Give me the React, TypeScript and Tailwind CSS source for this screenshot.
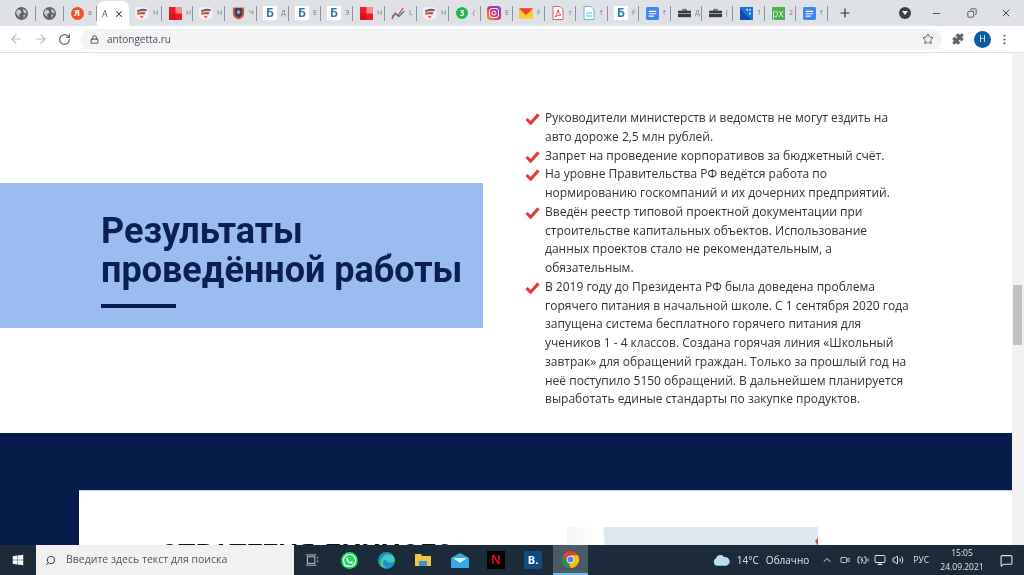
import { ArrowLeft, ArrowRight, RotateCw, Lock, Star, Puzzle, MoreVertical, Plus, Minus, X, Copy, Search, ChevronUp, Volume2, Monitor, MessageSquare, BatteryCharging, Video } from "lucide-react";
import { FaWhatsapp, FaWindows } from "react-icons/fa";

const sans = "font-['Open_Sans','Noto_Sans',sans-serif]";
const roboto = "font-['Roboto','Liberation_Sans',sans-serif]";

const Globe = () => (
  <svg viewBox="0 0 16 16" className="w-[13px] h-[13px]">
    <circle cx="8" cy="8" r="8" fill="#5f6368" />
    <path d="M3 3l4 1 1 3-3 2 1 4-3-3-2-3zM10 2l4 3 0 3-3-1-1-3zM10 10l3-1-2 5z" fill="#c9ccd1" />
  </svg>
);
const Ya = () => (
  <span className={`w-[13px] h-[13px] rounded-full bg-[#f0512a] text-white text-[9px] font-bold flex items-center justify-center ${sans}`}>Я</span>
);
const Shield = () => (
  <svg viewBox="0 0 16 16" className="w-[14px] h-[14px]">
    <rect y="1" width="15" height="14" rx="4" fill="#f1f1f1" />
    <path d="M2 5q6-3 12-1l-1 2q-6-1-10 1z" fill="#5f6468" />
    <path d="M2 8q6-2 10-1l-1 3q-5-1-8 0z" fill="#e8522f" />
    <path d="M5 12q3-1 5 0l-2 2z" fill="#e8522f" />
  </svg>
);
const RedSquare = () => (
  <svg viewBox="0 0 14 14" className="w-[13px] h-[13px]">
    <rect width="14" height="14" fill="#f3182a" />
    <rect x="7" width="7" height="7" fill="#f98c85" />
    <rect y="7" width="7" height="7" fill="#d8101f" />
  </svg>
);
const Emblem = () => (
  <svg viewBox="0 0 14 14" className="w-[13px] h-[14px]">
    <path d="M1 1h12v7q0 4-6 6-6-2-6-6z" fill="#d9552f" />
    <path d="M3 2h8v6q0 2-4 4-4-2-4-4z" fill="#2b3f66" />
    <circle cx="7" cy="6" r="2" fill="#9aa8b8" />
  </svg>
);
const Bb = () => (
  <span className={`w-[14px] h-[14px] bg-white text-[#2f7ab5] text-[12px] font-bold leading-[14px] text-center ${roboto}`}>Б</span>
);
const Chart = () => (
  <svg viewBox="0 0 16 16" className="w-[14px] h-[14px]" fill="none">
    <path d="M1 15L5 8l3 3 6-9" stroke="#e0403a" strokeWidth="1.3" />
    <path d="M1 12l4-3 4 3 6-6" stroke="#2f6fc4" strokeWidth="1.3" />
  </svg>
);
const Green3 = () => (
  <span className={`w-[12px] h-[12px] rounded-full bg-[#1fb84f] text-white text-[8px] font-bold flex items-center justify-center ${sans}`}>3</span>
);
const Insta = () => (
  <svg viewBox="0 0 14 14" className="w-[14px] h-[14px]">
    <defs>
      <linearGradient id="ig" x1="0" y1="1" x2="1" y2="0">
        <stop offset="0" stopColor="#f9a03c" />
        <stop offset="0.5" stopColor="#dd2a7b" />
        <stop offset="1" stopColor="#6a4fd0" />
      </linearGradient>
    </defs>
    <rect width="14" height="14" rx="3.5" fill="url(#ig)" />
    <rect x="2.5" y="2.5" width="9" height="9" rx="2.5" fill="none" stroke="#fff" strokeWidth="1" />
    <circle cx="7" cy="7" r="2" fill="none" stroke="#fff" strokeWidth="1" />
  </svg>
);
const Mail = () => (
  <svg viewBox="0 0 16 12" className="w-[15px] h-[11px]">
    <rect width="16" height="12" fill="#fcc934" />
    <path d="M0 0h16L8 8z" fill="#ea4335" />
  </svg>
);
const Pdf = () => (
  <svg viewBox="0 0 12 14" className="w-[12px] h-[14px]" fill="none">
    <path d="M1 .5h7l3 3v10H1z" fill="#fff" stroke="#e0605a" />
    <path d="M3 11q2-2 3-7 1 5 3 5-4 0-6 2z" stroke="#e0403a" strokeWidth=".9" />
  </svg>
);
const DocLight = () => (
  <svg viewBox="0 0 12 14" className="w-[12px] h-[14px]" fill="none">
    <path d="M1 .5h7l3 3v10H1z" fill="#fff" stroke="#5bbbe3" />
    <path d="M3 7h6M3 10h6" stroke="#5bbbe3" />
  </svg>
);
const Gdoc = () => (
  <svg viewBox="0 0 14 14" className="w-[13px] h-[13px]">
    <rect width="14" height="14" rx="1.5" fill="#4285f4" />
    <path d="M3 4h8v1.3H3zM3 6.6h8v1.3H3zM3 9.2h5.5v1.3H3z" fill="#fff" />
  </svg>
);
const Case = () => (
  <svg viewBox="0 0 14 10" className="w-[13px] h-[10px]">
    <path d="M5 1h4v1.5H5z" fill="none" stroke="#444" strokeWidth=".8" />
    <rect y="2.5" width="14" height="7" fill="#3c3c3c" />
    <rect y="5" width="14" height="1" fill="#aaa" />
  </svg>
);
const BlueChart = () => (
  <svg viewBox="0 0 14 14" className="w-[13px] h-[13px]">
    <rect width="14" height="14" fill="#1a73d8" />
    <path d="M0 2l12 12H0z" fill="#0f4ea8" />
    <path d="M7 2h1.4v2H7zM10 2h1.4v2H10zM10 6h1.4v2H10z" fill="#fff" />
  </svg>
);
const Px = () => (
  <span className={`w-[13px] h-[13px] bg-[#4caf50] text-[#d8f0d8] text-[10px] leading-[12px] text-center ${sans}`}>px</span>
);

const tabs: { icon: React.ReactNode; ch: string; w: string; active?: boolean }[] = [
  { icon: <Globe />, ch: "", w: "w-[28px]" },
  { icon: <Globe />, ch: "", w: "w-[28px]" },
  { icon: <Ya />, ch: "a", w: "w-[33px]" },
  { icon: null, ch: "", w: "w-[32px]", active: true },
  { icon: <Shield />, ch: "Н", w: "w-[33px]" },
  { icon: <RedSquare />, ch: "Н", w: "w-[31px]" },
  { icon: <Shield />, ch: "Н", w: "w-[32px]" },
  { icon: <Emblem />, ch: "Ч", w: "w-[32px]" },
  { icon: <Bb />, ch: "Д", w: "w-[32px]" },
  { icon: <Bb />, ch: "Е", w: "w-[32px]" },
  { icon: <Bb />, ch: "Э", w: "w-[32px]" },
  { icon: <RedSquare />, ch: "Н", w: "w-[32px]" },
  { icon: <Chart />, ch: "L", w: "w-[32px]" },
  { icon: <Shield />, ch: "Н", w: "w-[32px]" },
  { icon: <Green3 />, ch: "(", w: "w-[32px]" },
  { icon: <Insta />, ch: "E", w: "w-[32px]" },
  { icon: <Mail />, ch: "F", w: "w-[32px]" },
  { icon: <Pdf />, ch: "r", w: "w-[31px]" },
  { icon: <DocLight />, ch: "f", w: "w-[32px]" },
  { icon: <Bb />, ch: "F", w: "w-[31px]" },
  { icon: <Gdoc />, ch: "f", w: "w-[32px]" },
  { icon: <Case />, ch: "Д", w: "w-[31px]" },
  { icon: <Case />, ch: "(", w: "w-[31px]" },
  { icon: <BlueChart />, ch: "1", w: "w-[32px]" },
  { icon: <Px />, ch: "2", w: "w-[31px]" },
  { icon: <Gdoc />, ch: "f", w: "w-[32px]" },
];

const items = [
  ["Руководители министерств и ведомств не могут ездить на", "авто дороже 2,5 млн рублей."],
  ["Запрет на проведение корпоративов за бюджетный счёт."],
  ["На уровне Правительства РФ ведётся работа по", "нормированию госкомпаний и их дочерних предприятий."],
  ["Введён реестр типовой проектной документации при", "строительстве капитальных объектов. Использование", "данных проектов стало не рекомендательным, а", "обязательным."],
  [
    "В 2019 году до Президента РФ была доведена проблема",
    "горячего питания в начальной школе. С 1 сентября 2020 года",
    "запущена система бесплатного горячего питания для",
    "учеников 1 - 4 классов. Создана горячая линия «Школьный",
    "завтрак» для обращений граждан. Только за прошлый год на",
    "неё поступило 5150 обращений. В дальнейшем планируется",
    "выработать единые стандарты по закупке продуктов.",
  ],
];

function TabStrip() {
  return (
    <div className="h-[26px] bg-[#dee1e6] flex items-center pl-[8px] shrink-0">
      {tabs.map((t, i) =>
        t.active ? (
          <div key={i} className={`${t.w} h-[26px] mt-[1px] bg-white rounded-t-[7px] flex items-center pl-[5px] gap-[3px] shrink-0`}>
            <span className={`text-[9px] text-[#555] w-[9px] ${sans}`}>А</span>
            <X size={10} strokeWidth={2.5} className="text-[#333]" />
          </div>
        ) : (
          <div key={i} className={`${t.w} h-[15px] flex items-center pl-[6px] gap-[4px] border-r border-[#8f9398] shrink-0 overflow-hidden`}>
            <span className="w-[14px] flex justify-center shrink-0">{t.icon}</span>
            <span className={`text-[7px] text-[#777] ${sans}`}>{t.ch}</span>
          </div>
        ),
      )}
      <Plus size={14} strokeWidth={2} className="text-[#333] ml-[10px]" />
      <div className="ml-auto flex items-center">
        <span className="w-[12px] h-[12px] rounded-full bg-[#3c4043] flex items-center justify-center mr-[4px]">
          <span className="w-0 h-0 border-l-[3px] border-r-[3px] border-t-[4px] border-l-transparent border-r-transparent border-t-white" />
        </span>
        <span className="w-[42px] flex justify-center"><Minus size={11} className="text-[#444]" /></span>
        <span className="w-[30px] flex justify-center"><Copy size={10} className="text-[#444] -scale-x-100" /></span>
        <span className="w-[37px] flex justify-center"><X size={12} className="text-[#444]" /></span>
      </div>
    </div>
  );
}

function Toolbar() {
  return (
    <div className="h-[27px] bg-white border-b border-[#dcdfe3] flex items-center shrink-0">
      <ArrowLeft size={14} className="text-[#b6b9bd] ml-[9px]" />
      <ArrowRight size={14} className="text-[#b6b9bd] ml-[11px]" />
      <RotateCw size={13} strokeWidth={2.2} className="text-[#5f6368] ml-[10px]" />
      <div className="ml-[10px] w-[861px] h-[21px] rounded-full bg-[#f1f3f4] flex items-center pl-[9px]">
        <Lock size={9} strokeWidth={3} className="text-[#5f6368]" />
        <span className={`ml-[8px] text-[10px] text-[#4d5156] ${sans}`}>antongetta.ru</span>
        <Star size={12} className="ml-auto mr-[8px] text-[#5f6368]" />
      </div>
      <Puzzle size={12} fill="#5f6368" className="text-[#5f6368] ml-[10px]" />
      <span className={`ml-[10px] w-[17px] h-[17px] rounded-full bg-[#0b5aa5] text-white text-[9px] flex items-center justify-center ${sans}`}>Н</span>
      <MoreVertical size={13} className="text-[#5f6368] ml-[7px]" />
    </div>
  );
}

function Content() {
  return (
    <div className="flex-1 flex min-h-0">
      <div className="flex-1 min-w-0 overflow-hidden">
        <section className="h-[380px] bg-white flex">
          <div className="w-[483px] h-[145px] mt-[130px] bg-[#9abdf0] pl-[101px] pt-[29px] shrink-0">
            <h2 className={`text-[36px] leading-[39px] font-bold text-[#0a2050] whitespace-nowrap ${roboto}`}>
              Результаты<br />проведённой работы
            </h2>
            <div className="w-[75px] h-[4px] bg-[#061c4a] mt-[14px]" />
          </div>
          <ul className={`ml-[42px] mt-[56px] text-[12px] leading-[18.75px] text-[#333] ${sans}`}>
            {items.map((lines, i) => (
              <li key={i} className="flex">
                <svg viewBox="0 0 16 13" className="w-[15px] h-[12px] mt-[4px] shrink-0">
                  <path d="M1.5 6.500L6 11 14.500 1.500" fill="none" stroke="#e8392f" strokeWidth="3.3" />
                </svg>
                <div className="ml-[5px] whitespace-nowrap">
                  {lines.map((l, j) => (
                    <div key={j}>{l}</div>
                  ))}
                </div>
              </li>
            ))}
          </ul>
        </section>
        <section className="h-[200px] bg-[#061c4a] pl-[79px] pt-[57px]">
          <div className="h-[200px] bg-white flex pl-[81px] pt-[36px] border-t border-[#c9d0dc]">
            <h3 className={`text-[28.3px] leading-[30px] mt-[13px] font-bold text-[#111] whitespace-nowrap ${roboto}`}>СТРАТЕГИЯ ЛИЧНОГО</h3>
            <svg viewBox="0 0 251 100" className="w-[251px] h-[100px] ml-auto mr-[194px]">
              <defs>
                <linearGradient id="ph" x1="0" y1="0" x2="1" y2="0">
                  <stop offset="0" stopColor="#f4f7f9" />
                  <stop offset="0.14" stopColor="#ffffff" />
                </linearGradient>
              </defs>
              <rect width="251" height="100" fill="url(#ph)" />
              <path d="M36 0H251V100H46z" fill="#dde8ee" />
              <path d="M248 14l3-3v8z" fill="#d8433c" />
            </svg>
          </div>
        </section>
      </div>
      <div className="w-[12px] bg-[#f1f1f1] shrink-0 pt-[232px] pl-[1px]">
        <div className="w-[9px] h-[60px] bg-[#c1c1c1]" />
      </div>
    </div>
  );
}

function Taskbar() {
  return (
    <div className="h-[30px] bg-[#1c2b3a] flex items-center shrink-0 relative z-10">
      <span className="w-[36px] flex justify-center"><FaWindows size={12} className="text-white" /></span>
      <div className="w-[258px] h-[30px] bg-[#f1f1f1] flex items-center pl-[9px]">
        <Search size={11} className="text-[#333] -scale-x-100" />
        <span className={`ml-[10px] text-[10.5px] text-[#555] ${sans}`}>Введите здесь текст для поиска</span>
      </div>
      <span className="w-[36px] flex justify-center">
        <svg viewBox="0 0 14 14" className="w-[13px] h-[13px]" fill="none" stroke="#c7ccd1">
          <rect x="1.5" y="3" width="8" height="7" />
          <path d="M0 1h11M0 12h11M12.5 3v2M12.5 7v2" />
        </svg>
      </span>
      <span className="w-[38px] flex justify-center"><FaWhatsapp size={17} className="text-white bg-[#25d366] rounded-full p-[1px]" /></span>
      <span className="w-[37px] flex justify-center">
        <svg viewBox="0 0 16 16" className="w-[17px] h-[17px]">
          <circle cx="8" cy="8" r="8" fill="#1a8fd8" />
          <path d="M2 11q1-9 8-9 5 0 6 6-1 2-5 2-3 0-3-2 0-2 3-2-2-2-4 0-3 2-2 6 1 2 4 3-6 0-7-4z" fill="#4bd07f" />
          <path d="M5 6q3-4 8-1l2 3H9q-3 0-4-2z" fill="#41c8e8" />
        </svg>
      </span>
      <span className="w-[36px] flex justify-center">
        <svg viewBox="0 0 16 14" className="w-[16px] h-[14px]">
          <path d="M0 1h6l1 2h9v10H0z" fill="#f6c445" />
          <rect x="4" y="8" width="8" height="5" fill="#3a93d6" />
        </svg>
      </span>
      <span className="w-[37px] flex justify-center">
        <svg viewBox="0 0 18 15" className="w-[18px] h-[15px]">
          <path d="M0 5L9 0l9 5v10H0z" fill="#37a7e8" />
          <path d="M2 5h14L9 10z" fill="#d9f1fc" />
        </svg>
      </span>
      <span className="w-[36px] flex justify-center">
        <span className="w-[18px] h-[18px] bg-black text-[#e50914] text-[13px] font-bold leading-[18px] text-center font-['Liberation_Sans',sans-serif]">N</span>
      </span>
      <span className="w-[38px] flex justify-center">
        <span className={`w-[18px] h-[18px] bg-[#0f4c81] text-white text-[11px] font-bold leading-[18px] text-center ${sans}`}>B.</span>
      </span>
      <span className="ml-[1px] w-[35px] h-[30px] bg-[#4b5a67] border-b-2 border-[#76b9ed] flex items-center justify-center">
        <svg viewBox="0 0 16 16" className="w-[17px] h-[17px]">
          <circle cx="8" cy="8" r="8" fill="#db4437" />
          <path d="M8 16a8 8 0 0 0 7-12H8l-2.500 4z" fill="#fbbc05" />
          <path d="M1 4l4 7 3 5A8 8 0 0 1 1 4z" fill="#0f9d58" />
          <circle cx="8" cy="8" r="3.600" fill="#fff" />
          <circle cx="8" cy="8" r="2.800" fill="#4285f4" />
        </svg>
      </span>
      <div className={`ml-auto flex items-center text-[#dfe3e7] ${sans}`}>
        <svg viewBox="0 0 18 12" className="w-[17px] h-[12px]">
          <path d="M4 12a4 4 0 0 1-1-7.500A5 5 0 0 1 12 3a4.500 4.500 0 0 1 2 9z" fill="#b9dcf5" />
        </svg>
        <span className="ml-[7px] text-[10px]">14°C</span>
        <span className="ml-[7px] text-[10px]">Облачно</span>
        <span className="ml-[9px] w-[18px] flex justify-center"><ChevronUp size={12} /></span>
        <span className="w-[18px] flex justify-center"><Video size={10} /></span>
        <span className="w-[17px] flex justify-center"><BatteryCharging size={12} /></span>
        <span className="w-[18px] flex justify-center"><Monitor size={12} /></span>
        <span className="w-[18px] flex justify-center"><Volume2 size={12} /></span>
        <span className="ml-[6px] text-[8.5px]">РУС</span>
        <div className="ml-[8px] w-[50px] text-center text-[8.5px] leading-[14px]">
          <div>15:05</div>
          <div>24.09.2021</div>
        </div>
        <MessageSquare size={13} className="ml-[13px] mr-[11px]" />
      </div>
    </div>
  );
}

export default function App() {
  return (
    <div className="w-[1024px] h-[575px] overflow-hidden flex flex-col bg-white blur-[0.35px]">
      <TabStrip />
      <Toolbar />
      <Content />
      <Taskbar />
    </div>
  );
}
